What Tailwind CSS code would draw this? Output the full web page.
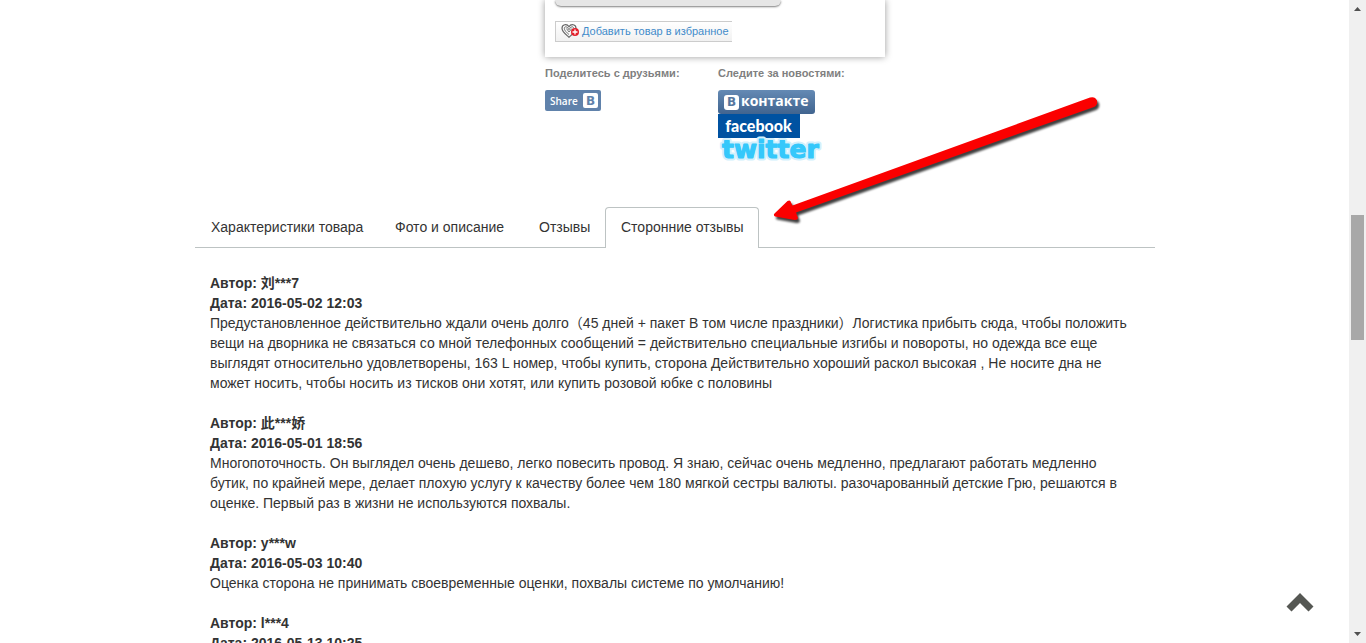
<!DOCTYPE html>
<html lang="ru">
<head>
<meta charset="utf-8">
<meta name="viewport" content="width=device-width, initial-scale=1">
<title>Сторонние отзывы</title>
<script src="https://cdn.jsdelivr.net/npm/@tailwindcss/browser@4"></script>
</head>
<body class="flex h-screen overflow-hidden bg-white font-['Liberation_Sans','Noto_Sans_CJK_SC',sans-serif] text-sm leading-5 text-[#333]">
<main class="min-w-0 flex-1 overflow-hidden pl-px">
  <div class="mx-auto max-w-[960px]">
    <section class="ml-[350px] w-[340px]">
      <div class="bg-white px-[10px] pb-[15px] shadow-[0_0_7px_rgba(0,0,0,0.4)]">
        <div class="h-[6px] w-[226px] rounded-b-[12px] bg-[#e6e6e6] shadow-[0_1px_2px_rgba(0,0,0,0.5)]"></div>
        <button type="button" class="mt-[15px] flex h-[21px] w-[177px] items-center gap-[3px] border border-r-0 border-[#ccc] bg-linear-to-b from-white to-[#f1f1f1] pb-px pl-[5px] text-[11px] whitespace-nowrap text-[#428bca]">
          <svg class="shrink-0" width="18" height="16" viewBox="0 0 18 16" fill="none" aria-hidden="true">
            <path d="M8 14.2C5 11.5 1 8.8 1 5.2 1 1.2 6 .5 8 3.8c2-3.3 7-2.6 7 1.4 0 3.600-4 6.300-7 9z" stroke="#666" stroke-width="1.200"/>
            <path d="M8 11.500C5.500 9.300 3.200 7.500 3.300 5.200c.2-2.200 3.200-2 4.700 1.600 1.500-3.600 4.500-3.800 4.700-1.600M5.400 5.500L8 9l2.800-3.500" stroke="#777"/>
            <circle cx="14" cy="9" r="4" fill="#e3202b"/>
            <path d="M11.500 9h5M14 6.500v5" stroke="#fff" stroke-width="1.300"/>
          </svg>
          <span>Добавить товар в избранное</span>
        </button>
      </div>
      <div class="flex pt-[6px] text-[11px] text-[#808080]">
        <div class="w-[173px] shrink-0">
          <p class="font-bold">Поделитесь с друзьями:</p>
          <button type="button" class="mt-[7px] flex h-[21px] w-14 items-center justify-between rounded-xs bg-[#6082ab] pr-[3px] pl-[5px] font-['Open_Sans',sans-serif] text-[10px] font-semibold text-white">
            Share
            <span class="flex h-[15px] w-[15px] items-center justify-center rounded-xs bg-white font-['DejaVu_Sans',sans-serif] text-[12px] font-bold text-[#6082ab]">В</span>
          </button>
        </div>
        <div>
          <p class="font-bold whitespace-nowrap">Следите за новостями:</p>
          <nav class="mt-[7px] flex flex-col items-start">
            <a href="#vk" class="flex h-6 w-[97px] items-center gap-[2px] rounded-[3px] bg-linear-to-b from-[#648ab4] to-[#41648f] pb-[2px] pl-[6px] font-['Open_Sans',sans-serif] text-[14px] font-bold text-white">
              <span class="mt-[2px] flex h-[15px] w-[15px] shrink-0 items-center justify-center rounded-[3px] bg-white font-['DejaVu_Sans',sans-serif] text-[12px] text-[#55779f]">В</span>
              <span>контакте</span>
            </a>
            <a href="#facebook" class="flex h-6 w-[82px] items-center justify-center bg-[#0052a1] pr-px font-['Lato',sans-serif] text-[16px] font-black text-white">facebook</a>
            <a href="#twitter">
              <svg class="overflow-visible" width="104" height="26" viewBox="0 0 104 26" stroke-linejoin="round" font-family="DejaVu Sans, sans-serif" font-size="25" font-weight="700">
                <text x="4" y="20" fill="#35c8fb" stroke="#d3f0fc" stroke-width="5" paint-order="stroke">twitter</text>
                <text x="4" y="20" fill="#35c8fb" stroke="#35c8fb" stroke-width="1">twitter</text>
              </svg>
            </a>
          </nav>
        </div>
      </div>
    </section>

    <nav class="mt-[43px] flex border-b border-[#bdc3c3] whitespace-nowrap">
      <a href="#specs" class="w-[184px] border border-transparent px-[15px] py-[9px]">Характеристики товара</a>
      <a href="#photo" class="w-[144px] border border-transparent px-[15px] py-[9px]">Фото и описание</a>
      <a href="#reviews" class="w-[82px] border border-transparent px-[15px] py-[9px]">Отзывы</a>
      <a href="#external" aria-current="page" class="-mb-px w-[154px] rounded-t-[4px] border border-b-0 border-[#bdc3c3] bg-white px-[15px] pt-[9px] pb-[10px]">Сторонние отзывы</a>
    </nav>

    <section class="flex flex-col gap-5 pt-[25px] pr-6 pl-[15px]">
      <article>
        <p class="font-bold">Автор: 刘***7</p>
        <p class="font-bold">Дата: 2016-05-02 12:03</p>
        <p>Предустановленное действительно ждали очень долго（45 дней + пакет В том числе праздники）Логистика прибыть сюда, чтобы положить вещи на дворника не связаться со мной телефонных сообщений = действительно специальные изгибы и повороты, но одежда все еще выглядят относительно удовлетворены, 163 L номер, чтобы купить, сторона Действительно хороший раскол высокая , Не носите дна не может носить, чтобы носить из тисков они хотят, или купить розовой юбке с половины</p>
      </article>
      <article>
        <p class="font-bold">Автор: 此***娇</p>
        <p class="font-bold">Дата: 2016-05-01 18:56</p>
        <p>Многопоточность. Он выглядел очень дешево, легко повесить провод. Я знаю, сейчас очень медленно, предлагают работать медленно бутик, по крайней мере, делает плохую услугу к качеству более чем 180 мягкой сестры валюты. разочарованный детские Грю, решаются в оценке. Первый раз в жизни не используются похвалы.</p>
      </article>
      <article>
        <p class="font-bold">Автор: y***w</p>
        <p class="font-bold">Дата: 2016-05-03 10:40</p>
        <p>Оценка сторона не принимать своевременные оценки, похвалы системе по умолчанию!</p>
      </article>
      <article>
        <p class="font-bold">Автор: l***4</p>
        <p class="font-bold">Дата: 2016-05-13 10:25</p>
      </article>
    </section>
  </div>
</main>

<aside class="flex w-[17px] shrink-0 flex-col items-center bg-[#f0f0f0]" aria-hidden="true">
  <svg class="mt-[7px]" width="7" height="4" viewBox="0 0 7 4"><path d="M0 4L3.500 0 7 4z" fill="#505050"/></svg>
  <div class="mt-[204px] h-[125px] w-[13px] bg-[#a8a8a8]"></div>
  <svg class="mt-auto mb-[7px]" width="7" height="4" viewBox="0 0 7 4"><path d="M0 0L3.500 4 7 0z" fill="#505050"/></svg>
</aside>

<svg class="pointer-events-none absolute top-[90px] left-[765px] drop-shadow-[2px_3px_1px_rgba(0,0,0,0.75)]" width="345" height="140" viewBox="0 0 345 140" aria-hidden="true">
  <path d="M325 7.500Q330 6 332 10.500 333 15 329 17L31 122.500 33 128Q32.500 130.500 29.500 130L10 126.500Q8 125.500 9.500 123.500L22.500 111Q25.500 109.500 26 112.500L27.500 115.500z" fill="#fb0000"/>
</svg>

<button type="button" aria-label="Наверх" class="fixed right-[52px] bottom-[31px]">
  <svg width="28" height="20" viewBox="0 0 28 20"><path d="M14 1L27.500 14.500 22.500 19.500 14 11 5.500 19.500.5 14.500z" fill="#555753"/></svg>
</button>
</body>
</html>
